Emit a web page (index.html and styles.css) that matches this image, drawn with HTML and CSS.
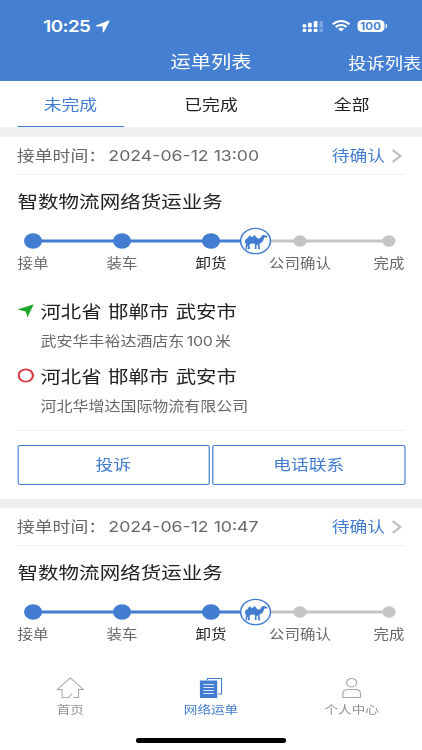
FILE: index.html
```html
<!DOCTYPE html>
<html lang="zh-CN">
<head>
<meta charset="utf-8">
<title>运单列表</title>
<link rel="stylesheet" href="styles.css">
</head>
<body>
<svg class="defs" width="0" height="0">
  <symbol id="track" viewBox="0 0 360 30">
    <path d="M28 15H218" stroke="#437dd1" stroke-width="2.8"/>
    <path d="M218 15H332" stroke="#c6c4c5" stroke-width="2.8"/>
    <g fill="#437dd1"><circle cx="28.2" cy="15" r="7.7"/><circle cx="104.1" cy="15" r="7.7"/><circle cx="180" cy="15" r="7.7"/></g>
    <g fill="#c6c4c5"><circle cx="255.9" cy="15" r="5.7"/><circle cx="331.8" cy="15" r="5.7"/></g>
    <circle cx="218" cy="15" r="12.7" fill="#fff" stroke="#437dd1" stroke-width="1.3"/>
    <path fill="#437dd1" d="M208.800 19.300L209 14.500Q209.500 12.500 211.300 12L212.800 9.300 215 11.200 217.300 9.100 219.300 11.900Q221 13.200 222 12L223.300 9.800Q224 8.800 225.300 9L228.200 10.200 227.800 11.500 225.500 11.600 224.600 14.400Q223.700 16.700 221.500 17.400L221.400 20 222 23.200H220.400L220 19.500 219.400 18.200 218.800 20 218.900 23H217.400L217.500 17.800 214.200 17.400 212.900 18.700 213.200 23.200H211.600L211.500 19.600 210.800 20.700 211 23.200H209.500L209.600 19.800 210.200 17.500 209.600 16.500z"/>
  </symbol>
  <symbol id="chevron" viewBox="0 0 9 14"><path d="M1 1l6.500 6L1 13" fill="none" stroke="#bfbdc1" stroke-width="1.9"/></symbol>
</svg>
<div class="screen">
  <header class="header">
    <div class="status">
      <span class="clock">10:25</span>
      <svg class="locate" width="13" height="13" viewBox="0 0 13 13"><path fill="#fff" d="M.8 5.400L11.600.6q1-.2.8.8L7.600 12q-.6.900-1 0V6.600H1.200Q-.1 6 .8 5.400z"/></svg>
      <svg class="signal" width="18" height="11" viewBox="0 0 18 11"><g fill="#fff"><rect x="0" y="7.700" width="3.300" height="3.200" rx="1"/><rect x="4.700" y="7.700" width="3.300" height="3.200" rx="1"/><rect x="9.600" y="7.700" width="3.300" height="3.200" rx="1"/><rect x="0" y="3.200" width="3.300" height="3.400" rx="1"/><rect x="4.700" y="1.800" width="3.300" height="4.800" rx="1"/><rect x="9.600" y="0" width="3.300" height="6.600" rx="1"/><path opacity=".3" d="M14.500 0h3v6.600h-3zM14.500 7.700h3v3.200h-3z"/></g></svg>
      <svg class="wifi" width="16" height="12" viewBox="0 0 16 12"><g fill="none" stroke="#fff" stroke-width="2"><path d="M.8 4.300Q8-2.300 15.200 4.300"/><path d="M3.400 7Q8 2.900 12.600 7"/></g><path fill="#fff" d="M5.400 8.900Q8 6.800 10.600 8.900L8 11.600z"/></svg>
      <span class="battery">100</span><i class="cap"></i>
    </div>
    <div class="nav"><span></span><h1>运单列表</h1><a>投诉列表</a></div>
  </header>
  <nav class="tabs"><a class="active">未完成</a><a>已完成</a><a>全部</a></nav>
  <main>
    <article class="card">
      <div class="meta"><span>接单时间：</span><time>2024-06-12 13:00</time><b>待确认</b><svg width="9" height="14"><use href="#chevron"/></svg></div>
      <h2>智数物流网络货运业务</h2>
      <svg class="track" width="360" height="30"><use href="#track"/></svg>
      <div class="steps"><span>接单</span><span>装车</span><span class="current">卸货</span><span>公司确认</span><span>完成</span></div>
      <div class="route">
        <div class="place"><svg width="14" height="14" viewBox="0 0 14 14"><path fill="#22a52b" d="M0 5.400L13.800.3 8.500 13.300 6.800 7.500z"/></svg><h3>河北省 邯郸市 武安市</h3></div>
        <p>武安华丰裕达酒店东<span class="num">100</span>米</p>
        <div class="place"><svg width="14" height="15" viewBox="0 0 14 15"><circle cx="7" cy="7.500" r="6.100" fill="none" stroke="#d83b43" stroke-width="1.900"/></svg><h3>河北省 邯郸市 武安市</h3></div>
        <p>河北华增达国际物流有限公司</p>
      </div>
      <div class="actions"><button>投诉</button><button>电话联系</button></div>
    </article>
    <article class="card">
      <div class="meta"><span>接单时间：</span><time>2024-06-12 10:47</time><b>待确认</b><svg width="9" height="14"><use href="#chevron"/></svg></div>
      <h2>智数物流网络货运业务</h2>
      <svg class="track" width="360" height="30"><use href="#track"/></svg>
      <div class="steps"><span>接单</span><span>装车</span><span class="current">卸货</span><span>公司确认</span><span>完成</span></div>
    </article>
  </main>
  <footer class="tabbar">
    <div class="items">
      <a><svg width="24" height="22" viewBox="0 0 24 22"><path d="M7.500 20.500H5V12.500H.8L12 1l11.200 11.500H19v8h-4.500M8 20.500h2.500l3-4" fill="none" stroke="#a5a5a5" stroke-width=".9"/></svg><span>首页</span></a>
      <a class="active"><svg width="20" height="22" viewBox="0 0 20 22"><path d="M7 3V1.500h12V17h-3" fill="none" stroke="#437dd1"/><path d="M.5 3.500h14.800V21H.5z" fill="#437dd1"/><path d="M3.500 7.500h9M3.500 10.500h9M3.500 13.500h9M3.500 16.500h9" stroke="#dce8f8" stroke-width="1.200"/></svg><span>网络运单</span></a>
      <a><svg width="18" height="22" viewBox="0 0 18 22"><g fill="none" stroke="#a5a5a5"><circle cx="9" cy="5.700" r="4.300"/><path d="M1.500 20.500v-4q0-4 4-4h7q4 0 4 4v4z"/></g></svg><span>个人中心</span></a>
    </div>
    <div class="home-bar"></div>
  </footer>
</div>
</body>
</html>
```
FILE: styles.css
```css
* { box-sizing: border-box; margin: 0; padding: 0; }
html, body { width: 422px; height: 750px; overflow: hidden; background: #fff; }
.defs { display: none; }
/* 360-unit layout widened to fill the 422px viewport */
.screen {
  width: 360px; height: 750px; display: flex; flex-direction: column;
  transform: scaleX(1.17222); transform-origin: 0 0;
  font-family: Inter, "Noto Sans CJK SC", sans-serif; font-size: 15.2px; color: #222;
  white-space: nowrap;
}
svg { display: block; flex: none; }
h1, h2, h3 { font-weight: 400; }
.header { height: 81px; background: #457fd1; color: #fff; flex: none; }
.status { height: 42px; padding: 10px 28px 0 37px; display: flex; align-items: center; }
.clock { font-size: 16px; font-weight: 600; width: 40px; margin-right: 4px; letter-spacing: -.5px; }
.signal { margin-left: 163.5px; }
.wifi { margin-left: 7px; }
.battery {
  flex: none; width: 23.5px; height: 12.5px; margin-left: 6px; border-radius: 4px; background: #fff; color: #457fd1;
  font-size: 10px; font-weight: 700; line-height: 12.5px; text-align: center;
}
.cap { flex: none; width: 1.3px; height: 4px; margin-left: 1px; background: #fff; border-radius: 1px; }
.nav { height: 39px; display: grid; grid-template-columns: 1fr auto 1fr; align-items: center; }
.nav h1 { font-size: 17.3px; line-height: 38px; }
.nav a { font-size: 15.6px; text-align: right; padding-right: .5px; }
.tabs { height: 46px; display: grid; grid-template-columns: repeat(3, 1fr); flex: none; }
.tabs a { width: 91px; margin: 0 auto; text-align: center; line-height: 48px; height: 46px; }
.tabs .active { color: #437dd1; border-bottom: 1.5px solid #437dd1; }
main { height: 523px; overflow: hidden; background: #fff; flex: none; }
.card { border-top: 9px solid #efefef; }
.card:first-child { border-top-width: 10px; }
.meta {
  height: 38px; margin: 0 14.5px; padding-right: 3px; border-bottom: 1px solid #f0f0f0;
  display: flex; align-items: center; color: #686868; line-height: 36px;
}
.meta time { width: 129px; margin-left: 2px; font-size: 15.1px; }
.meta b { margin-left: auto; margin-right: 5px; font-weight: 400; color: #437dd1; }
.card h2 { height: 51px; padding: 0 15px; font-size: 17.5px; line-height: 53px; }
.track { height: 30px; }
.steps { height: 16px; padding: 0 15.2px; display: flex; justify-content: space-between; font-size: 13.2px; line-height: 14px; color: #686868; }
.steps span { width: 26px; display: flex; justify-content: center; }
.steps .current { color: #222; }
.route { height: 159px; margin: 0 14.5px; padding-top: 25px; border-bottom: 1px solid #f0f0f0; }
.place { height: 30px; display: flex; align-items: center; gap: 6px; }
.place svg { margin-top: -3px; }
.place h3 { font-size: 17.4px; line-height: 30px; word-spacing: .6px; }
.route p { height: 35px; padding-left: 20px; font-size: 13.65px; line-height: 28px; color: #686868; }
.num { margin: 0 2px; letter-spacing: -.2px; }
.actions { display: flex; gap: 2.5px; padding: 13.5px 14.5px 14.5px; }
.actions button {
  flex: 1; height: 40px; border: 1px solid #437dd1; border-radius: 2px; background: #fff;
  color: #437dd1; font: 400 15.2px/38px Inter, "Noto Sans CJK SC", sans-serif;
}
.tabbar { height: 100px; background: #fff; flex: none; }
.items { height: 88px; padding-top: 27px; display: grid; grid-template-columns: repeat(3, 1fr); }
.items a { display: flex; flex-direction: column; align-items: center; font-size: 11.6px; line-height: 23px; color: #929292; }
.items .active { color: #437dd1; }
.home-bar { width: 128px; height: 4.5px; border-radius: 2px; background: #000; margin: 0 auto; }
```
